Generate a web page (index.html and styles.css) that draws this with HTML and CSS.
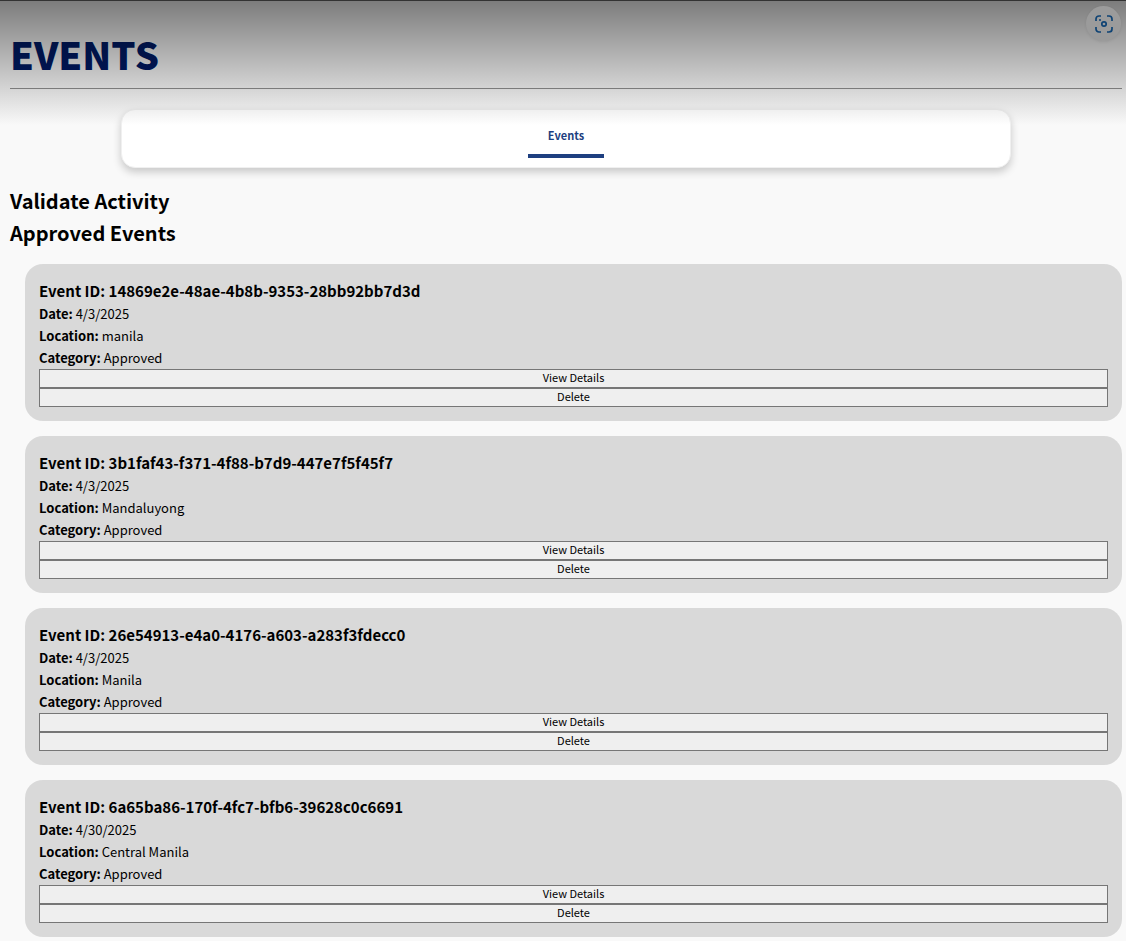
FILE: index.html
```html
<!DOCTYPE html>
<html lang="en">
<head>
<meta charset="utf-8">
<title>Events</title>
<link rel="stylesheet" href="styles.css">
</head>
<body>
<div class="shade"></div>
<button class="capture" type="button" aria-label="Capture">
  <svg width="18" height="18" viewBox="0 0 18 18" fill="none" stroke="currentColor" stroke-width="1.700">
    <path d="M1 6V4a3 3 0 0 1 3-3H6M12 1h2a3 3 0 0 1 3 3V6M17 12v2a3 3 0 0 1-3 3H12M6 17H4A3 3 0 0 1 1 14V12"/>
    <circle cx="9" cy="9" r="2.200"/>
    <circle cx="5" cy="5" r="1" fill="currentColor" stroke="none"/>
  </svg>
</button>
<main class="page">
  <h1 class="title">EVENTS</h1>
  <nav class="tabs"><a class="tab" href="#events">Events</a></nav>
  <section id="events">
    <h2 class="heading">Validate Activity</h2>
    <h2 class="heading">Approved Events</h2>
    <div class="cards">
      <article class="card">
        <h3 class="card-title">Event ID: 14869e2e-48ae-4b8b-9353-28bb92bb7d3d</h3>
        <p class="row"><strong>Date:</strong> 4/3/2025</p>
        <p class="row"><strong>Location:</strong> manila</p>
        <p class="row"><strong>Category:</strong> Approved</p>
        <button class="action" type="button">View Details</button>
        <button class="action" type="button">Delete</button>
      </article>
      <article class="card">
        <h3 class="card-title">Event ID: 3b1faf43-f371-4f88-b7d9-447e7f5f45f7</h3>
        <p class="row"><strong>Date:</strong> 4/3/2025</p>
        <p class="row"><strong>Location:</strong> Mandaluyong</p>
        <p class="row"><strong>Category:</strong> Approved</p>
        <button class="action" type="button">View Details</button>
        <button class="action" type="button">Delete</button>
      </article>
      <article class="card">
        <h3 class="card-title">Event ID: 26e54913-e4a0-4176-a603-a283f3fdecc0</h3>
        <p class="row"><strong>Date:</strong> 4/3/2025</p>
        <p class="row"><strong>Location:</strong> Manila</p>
        <p class="row"><strong>Category:</strong> Approved</p>
        <button class="action" type="button">View Details</button>
        <button class="action" type="button">Delete</button>
      </article>
      <article class="card">
        <h3 class="card-title">Event ID: 6a65ba86-170f-4fc7-bfb6-39628c0c6691</h3>
        <p class="row"><strong>Date:</strong> 4/30/2025</p>
        <p class="row"><strong>Location:</strong> Central Manila</p>
        <p class="row"><strong>Category:</strong> Approved</p>
        <button class="action" type="button">View Details</button>
        <button class="action" type="button">Delete</button>
      </article>
    </div>
  </section>
</main>
</body>
</html>
```
FILE: styles.css
```css
* {
  box-sizing: border-box;
  margin: 0;
}

body {
  background: #f9f9f9;
  border-top: 1px solid #333;
  color: #000;
  font-family: "Noto Sans CJK JP", "Noto Sans", sans-serif;
  font-size: 13px;
}

.page {
  padding: 23px 4px 4px 10px;
}

/* Gradient laid over the top of the page */
.shade {
  position: absolute;
  inset: 1px 0 auto;
  height: 124px;
  background: linear-gradient(rgba(0, 0, 0, 0.5), rgba(0, 0, 0, 0));
  pointer-events: none;
  z-index: 1;
}

.capture {
  position: absolute;
  top: 6px;
  right: 5px;
  z-index: 2;
  display: grid;
  place-items: center;
  width: 35px;
  height: 35px;
  padding: 0;
  border: 0;
  border-radius: 50%;
  background: #9b9b9b;
  box-shadow: 0 1px 3px rgba(0, 0, 0, 0.08);
  color: #0f4374;
}

.title {
  padding-bottom: 4px;
  border-bottom: 1px solid #909090;
  color: #001a66;
  font-size: 38px;
  font-weight: 900;
  line-height: 60px;
}

.tabs {
  display: flex;
  justify-content: center;
  width: 80%;
  height: 59px;
  margin: 20px auto 17px;
  padding-bottom: 9px;
  border: 1px solid #f0f0f0;
  border-radius: 14px;
  background: #fff;
  box-shadow: 0 4px 8px rgba(0, 0, 0, 0.2);
}

.tab {
  display: grid;
  place-items: center;
  width: 76px;
  padding-top: 5px;
  border-bottom: 4px solid #1e3f80;
  color: #1e3f80;
  font-size: 11px;
  font-weight: 700;
  text-decoration: none;
}

.heading {
  font-size: 20px;
  line-height: 32px;
}

.cards {
  display: grid;
  gap: 15px;
  padding: 15px 0 0 15px;
}

.card {
  display: flex;
  flex-direction: column;
  padding: 14px;
  border-radius: 18px;
  background: #d9d9d9;
}

.card-title {
  font-size: 15px;
  line-height: 25px;
}

.row {
  line-height: 22px;
}

.action {
  height: 19px;
  padding: 0 0 2px;
  border: 1px solid #767676;
  border-radius: 0;
  background: #efefef;
  color: #000;
  font-family: inherit;
  font-size: 11px;
  line-height: 15px;
}
```
